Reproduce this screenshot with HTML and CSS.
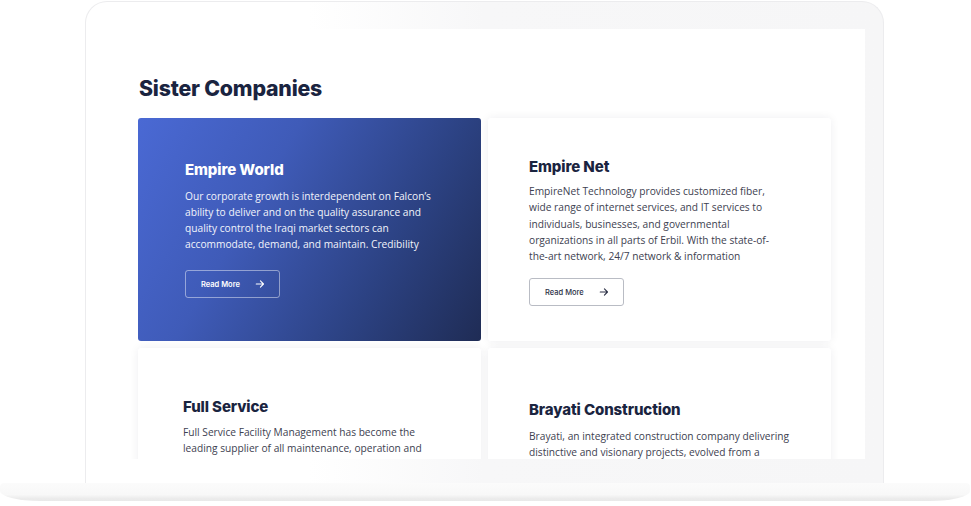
FILE: index.html
```html
<!DOCTYPE html>
<html lang="en">
<head>
<meta charset="utf-8">
<title>Sister Companies</title>
<link rel="stylesheet" href="styles.css">
</head>
<body>
<div class="stage">
  <div class="frame">
    <div class="screen">
      <h2 class="heading">Sister Companies</h2>
      <div class="grid">
        <div class="card card-featured">
          <div class="card-body body-a">
            <h3 class="card-title">Empire World</h3>
            <p class="card-text">Our corporate growth is interdependent on Falcon’s ability to deliver and on the quality assurance and quality control the Iraqi market sectors can accommodate, demand, and maintain. Credibility</p>
            <a class="btn btn-light" href="#">Read More
              <svg class="arrow" viewBox="0 0 12 12" width="10" height="10"><path d="M1.5 6h8.5M6.5 2.2 10.2 6 6.5 9.8" fill="none" stroke="currentColor" stroke-width="1.3" stroke-linecap="round" stroke-linejoin="round"/></svg>
            </a>
          </div>
        </div>
        <div class="card">
          <div class="card-body body-b">
            <h3 class="card-title">Empire Net</h3>
            <p class="card-text">EmpireNet Technology provides customized fiber, wide range of internet services, and IT services to individuals, businesses, and governmental organizations in all parts of Erbil. With the state-of-the-art network, 24/7 network &amp; information</p>
            <a class="btn btn-dark" href="#">Read More
              <svg class="arrow" viewBox="0 0 12 12" width="10" height="10"><path d="M1.5 6h8.5M6.5 2.2 10.2 6 6.5 9.8" fill="none" stroke="currentColor" stroke-width="1.3" stroke-linecap="round" stroke-linejoin="round"/></svg>
            </a>
          </div>
        </div>
        <div class="card">
          <div class="card-body body-c">
            <h3 class="card-title">Full Service</h3>
            <p class="card-text">Full Service Facility Management has become the leading supplier of all maintenance, operation and services in the region</p>
          </div>
        </div>
        <div class="card">
          <div class="card-body body-d">
            <h3 class="card-title">Brayati Construction</h3>
            <p class="card-text"><span class="nowrap">Brayati, an integrated construction company delivering</span> distinctive and visionary projects, evolved from a family business</p>
          </div>
        </div>
      </div>
    </div>
  </div>
  <div class="base"></div>
</div>
</body>
</html>
```
FILE: styles.css
```css
html, body {
  margin: 0;
  padding: 0;
  background: #ffffff;
}
body {
  width: 971px;
  height: 506px;
  overflow: hidden;
  font-family: "Open Sans", "Liberation Sans", sans-serif;
}
.stage {
  width: 971px;
  padding-top: 1px;
}
.frame {
  margin-left: 85px;
  width: 799px;
  height: 482px;
  border: 1px solid #ececee;
  border-bottom: none;
  border-radius: 22px 22px 0 0;
  background: linear-gradient(to right, #ffffff 0%, #ffffff 28%, #f7f7f8 50%, #f6f6f7 100%);
  padding: 27px 18px 0 14px;
  box-sizing: border-box;
}
.screen {
  background: #ffffff;
  height: 430px;
  overflow: hidden;
  padding: 45px 34px 0 38px;
  box-sizing: border-box;
}
.heading {
  margin: 0 0 16px 1px;
  font-family: "Inter", sans-serif;
  font-weight: 800;
  font-size: 21.3px;
  line-height: 28px;
  letter-spacing: -0.2px;
  color: #1a2440;
}
.grid {
  display: grid;
  grid-template-columns: 343px 343px;
  grid-template-rows: 223px 223px;
  column-gap: 7px;
  row-gap: 7px;
}
.card {
  background: #ffffff;
  border-radius: 3px;
  box-shadow: 0 0 10px rgba(20, 30, 60, 0.07);
}
.card-featured {
  background: linear-gradient(120deg, #4a69d4 0%, #3f5bb8 35%, #2c4283 70%, #1f2c55 100%);
  box-shadow: none;
}
.card-body {
  box-sizing: border-box;
}
.body-a { padding: 42px 30px 0 47px; }
.body-b { padding: 39px 30px 0 41px; }
.body-c { padding: 49px 30px 0 45px; }
.body-d { padding: 52px 20px 0 41px; }
.card-title {
  margin: 0 0 8px 0;
  font-family: "Inter", sans-serif;
  font-weight: 800;
  font-size: 15px;
  line-height: 20px;
  letter-spacing: -0.1px;
  color: #1a2440;
}
.body-a .card-title { margin-bottom: 8px; }
.body-b .card-title { margin-bottom: 6px; }
.body-c .card-title { margin-bottom: 7px; }
.body-d .card-title { margin-bottom: 8px; }
.card-featured .card-title {
  color: #ffffff;
}
.card-text {
  margin: 0;
  font-family: "Open Sans", sans-serif;
  font-size: 10.2px;
  line-height: 16.3px;
  color: #3d4150;
  width: 252px;
}
.body-a .card-text {
  line-height: 16px;
}
.body-d .card-text {
  width: 250px;
}
.nowrap {
  white-space: nowrap;
}
.card-featured .card-text {
  color: #f2f4fb;
}
.btn {
  display: flex;
  align-items: center;
  justify-content: space-between;
  box-sizing: border-box;
  width: 95px;
  height: 28px;
  padding: 0 14px 0 15px;
  border-radius: 3px;
  font-family: "Inter", sans-serif;
  font-size: 7.5px;
  font-weight: 600;
  text-decoration: none;
}
.btn-light {
  margin-top: 18px;
  border: 1px solid rgba(255, 255, 255, 0.45);
  color: #ffffff;
}
.btn-dark {
  margin-top: 14px;
  border: 1px solid #b9bcc4;
  color: #2c3146;
  font-weight: 500;
}
.arrow {
  display: block;
}
.base {
  height: 18px;
  width: 970px;
  border-radius: 4px 4px 40px 40px / 4px 4px 10px 10px;
  background: linear-gradient(to bottom, #fbfbfb 0%, #f8f8f8 65%, #ececec 85%, #e9e9e9 100%);
}
```
